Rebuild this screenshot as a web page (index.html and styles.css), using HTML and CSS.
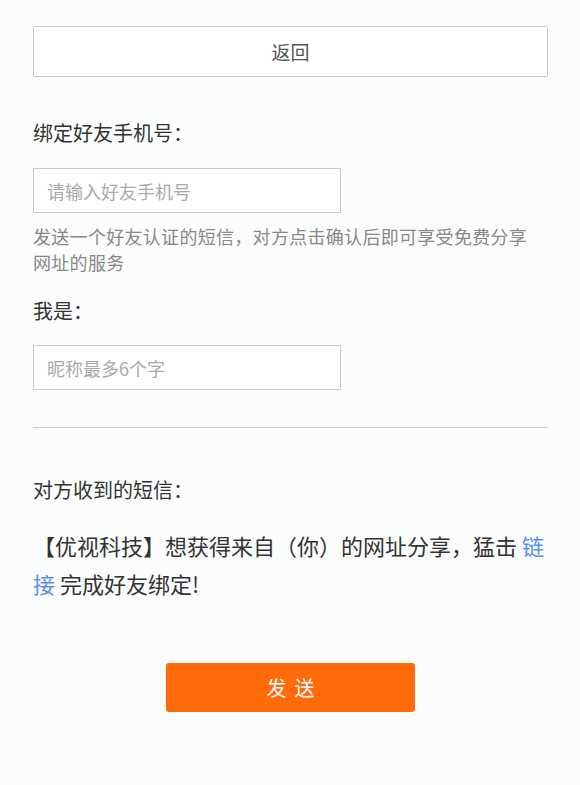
FILE: index.html
```html
<!DOCTYPE html>
<html lang="zh-CN">
  <head>
    <meta charset="UTF-8" />
    <meta name="viewport" content="width=device-width, initial-scale=1.0" />
    <title>绑定好友</title>
    <link rel="stylesheet" href="styles.css">
  </head>
  <body>
    <div class="page">
      <button class="back-btn">返回</button>

      <div class="label label-first">绑定好友手机号：</div>
      <input type="text" class="field" placeholder="请输入好友手机号" />
      <p class="hint">发送一个好友认证的短信，对方点击确认后即可享受免费分享网址的服务</p>

      <div class="label label-name">我是：</div>
      <input type="text" class="field field-name" placeholder="昵称最多6个字" />

      <hr class="divider" />

      <div class="label label-sms">对方收到的短信：</div>
      <p class="sms">【优视科技】想获得来自（你）的网址分享，猛击 <a href="#">链接</a> 完成好友绑定!</p>

      <div class="actions">
        <button class="send-btn">发送</button>
      </div>
    </div>
  </body>
</html>
```

FILE: styles.css
```css
body {
  margin: 0;
  background-color: #fbfcfc;
  font-family: "Noto Sans CJK SC", "Liberation Sans", sans-serif;
  color: #333;
}
.page {
  padding: 26px 32px 40px 33px;
}
.back-btn {
  display: block;
  width: 100%;
  height: 51px;
  background: #fff;
  border: 1px solid #c9c9c9;
  border-radius: 2px;
  font-family: inherit;
  font-size: 19px;
  color: #555;
  cursor: pointer;
}
.label {
  font-size: 20px;
  line-height: 30px;
  color: #333;
}
.label-first {
  margin-top: 41px;
}
.label-name {
  margin-top: 21px;
}
.label-sms {
  margin-top: 47px;
}
.field {
  display: block;
  box-sizing: border-box;
  width: 308px;
  height: 45px;
  margin-top: 20px;
  padding: 0 13px;
  border: 1px solid #c9c9c9;
  background: #fff;
  font-family: inherit;
  font-size: 18px;
  color: #333;
  outline: none;
}
.field-name {
  margin-top: 19px;
}
.field::placeholder {
  color: #a9a9a9;
}
.hint {
  max-width: 500px;
  margin: 10px 0 0;
  font-size: 18px;
  letter-spacing: 0.3px;
  line-height: 26px;
  color: #888;
}
.divider {
  margin: 37px 0 0;
  border: none;
  border-top: 1px solid #cccccc;
}
.sms {
  margin: 21px 0 0;
  font-size: 22px;
  line-height: 38px;
  color: #333;
}
.sms a {
  color: #5b8cf0;
  text-decoration: none;
}
.actions {
  margin-top: 61px;
  text-align: center;
}
.send-btn {
  width: 249px;
  height: 49px;
  background-color: #ff6a0a;
  border: none;
  border-radius: 3px;
  font-family: inherit;
  font-size: 20px;
  letter-spacing: 8px;
  padding-left: 14px;
  color: #fff;
  cursor: pointer;
}
```
